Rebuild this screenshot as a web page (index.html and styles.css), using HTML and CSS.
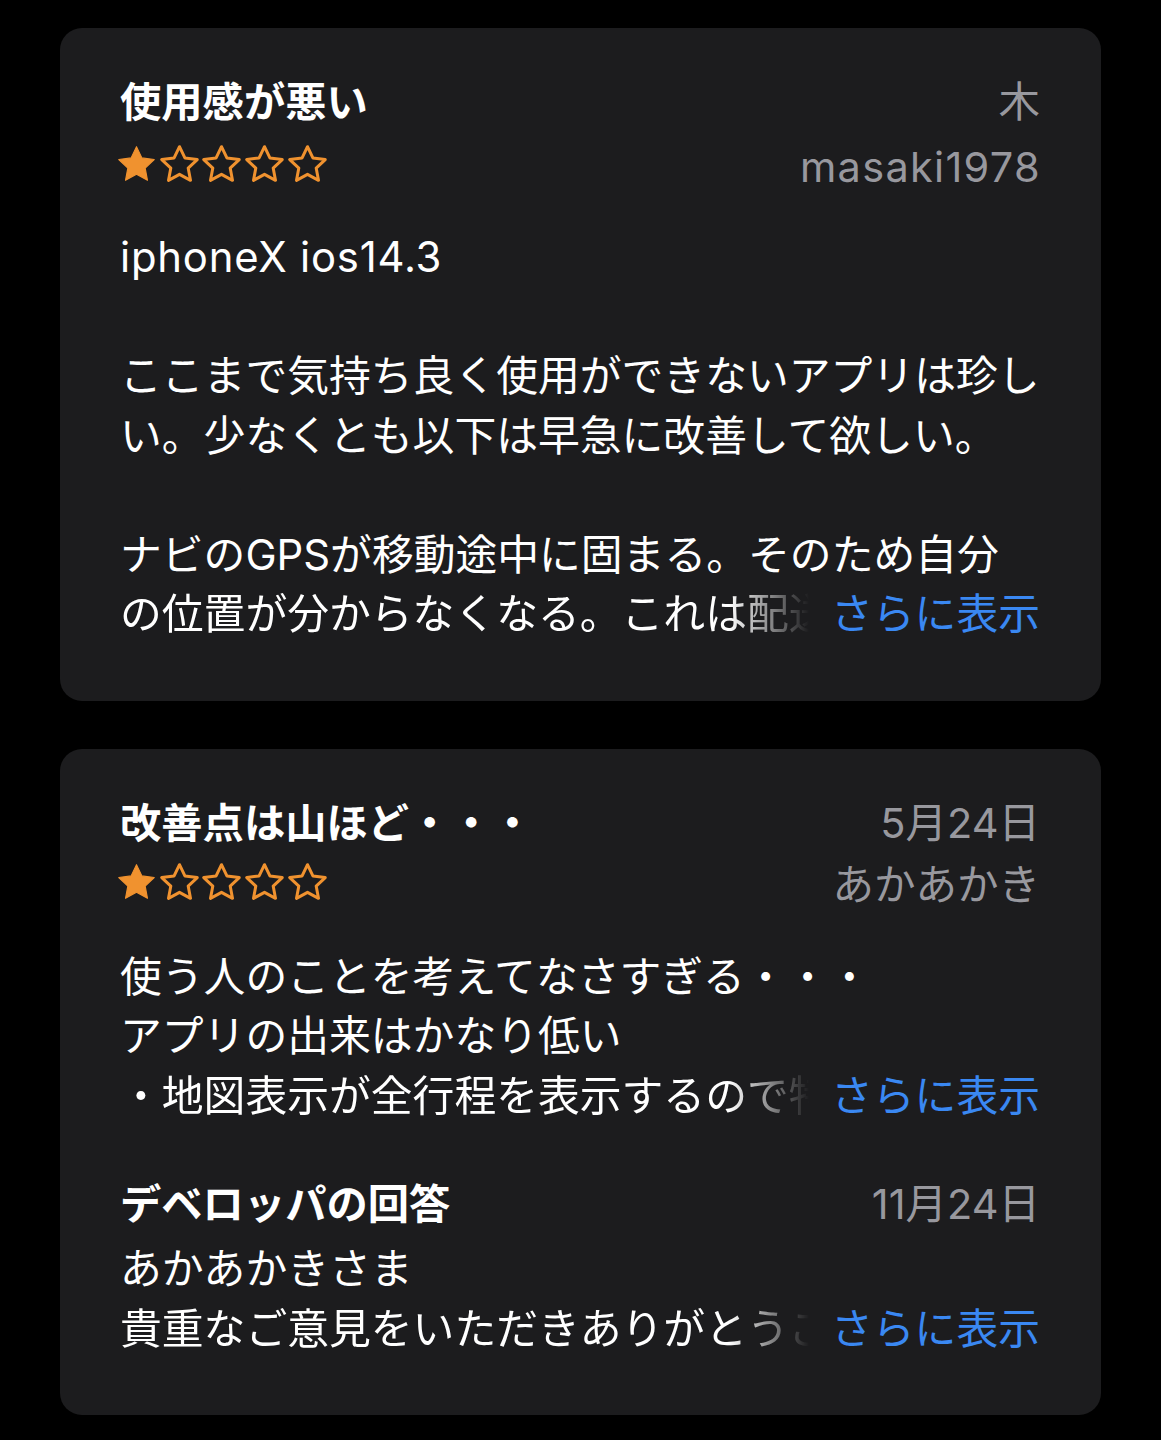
FILE: index.html
```html
<!DOCTYPE html>
<html lang="ja">
<head>
<meta charset="utf-8">
<title>レビュー</title>
<link rel="stylesheet" href="styles.css">
</head>
<body>
<svg width="0" height="0" class="defs" aria-hidden="true">
  <defs>
    <path id="star" d="M12 2.6l2.85 5.95 6.55.85-4.8 4.5 1.22 6.5L12 17.25 6.18 20.4l1.22-6.5-4.8-4.5 6.55-.85z"/>
  </defs>
</svg>
<main class="list">
  <section class="card">
    <div class="row head">
      <h2 class="title">使用感が悪い</h2>
      <span class="meta">木</span>
    </div>
    <div class="row sub">
      <div class="stars">
        <svg class="star full" viewBox="1.7 1.7 20.6 19.6"><use href="#star"/></svg>
        <svg class="star" viewBox="1.7 1.7 20.6 19.6"><use href="#star"/></svg>
        <svg class="star" viewBox="1.7 1.7 20.6 19.6"><use href="#star"/></svg>
        <svg class="star" viewBox="1.7 1.7 20.6 19.6"><use href="#star"/></svg>
        <svg class="star" viewBox="1.7 1.7 20.6 19.6"><use href="#star"/></svg>
      </div>
      <span class="meta user-latin">masaki1978</span>
    </div>
    <div class="body">
      <p class="latin">iphoneX ios14.3</p>
      <p class="para">ここまで気持ち良く使用ができないアプリは珍し<br>い。少なくとも以下は早急に改善して欲しい。</p>
      <p class="para">ナビのGPSが移動途中に固まる。そのため自分</p>
      <div class="more-line">
        <span class="clip">の位置が分からなくなる。これは配送ルートを</span>
        <a class="more" href="#">さらに表示</a>
      </div>
    </div>
  </section>

  <section class="card">
    <div class="row head">
      <h2 class="title">改善点は山ほど・・・</h2>
      <span class="meta">5月24日</span>
    </div>
    <div class="row sub sub2">
      <div class="stars">
        <svg class="star full" viewBox="1.7 1.7 20.6 19.6"><use href="#star"/></svg>
        <svg class="star" viewBox="1.7 1.7 20.6 19.6"><use href="#star"/></svg>
        <svg class="star" viewBox="1.7 1.7 20.6 19.6"><use href="#star"/></svg>
        <svg class="star" viewBox="1.7 1.7 20.6 19.6"><use href="#star"/></svg>
        <svg class="star" viewBox="1.7 1.7 20.6 19.6"><use href="#star"/></svg>
      </div>
      <span class="meta">あかあかき</span>
    </div>
    <div class="body body2">
      <p>使う人のことを考えてなさすぎる・・・<br>アプリの出来はかなり低い</p>
      <div class="more-line">
        <span class="clip">・地図表示が全行程を表示するので特に</span>
        <a class="more" href="#">さらに表示</a>
      </div>
    </div>
    <div class="row head dev">
      <h3 class="title">デベロッパの回答</h3>
      <span class="meta">11月24日</span>
    </div>
    <div class="body dev-body">
      <p>あかあかきさま</p>
      <div class="more-line">
        <span class="clip">貴重なご意見をいただきありがとうございます</span>
        <a class="more" href="#">さらに表示</a>
      </div>
    </div>
  </section>
</main>
</body>
</html>
```

FILE: styles.css
```css
* { box-sizing: border-box; }

html, body {
  margin: 0;
  padding: 0;
  background: #000;
}

body {
  font-family: "Inter", "Noto Sans CJK JP", "Noto Sans", sans-serif;
  color: #fff;
  font-size: 41.8px;
  -webkit-font-smoothing: antialiased;
}

.defs {
  position: absolute;
  width: 0;
  height: 0;
}

.list {
  display: flex;
  flex-direction: column;
  gap: 48px;
  padding: 28px 60px 27px;
}

.card {
  background: #1c1c1e;
  border-radius: 22px;
  padding: 49px 61px 56px 60px;
}

.row {
  display: flex;
  justify-content: space-between;
  align-items: center;
  height: 50px;
}

.title {
  margin: 0;
  font-size: 41.3px;
  font-weight: 700;
  line-height: 50px;
  white-space: nowrap;
}

.meta {
  color: #98989e;
  font-size: 41.5px;
  line-height: 50px;
  white-space: nowrap;
}

.user-latin {
  letter-spacing: 1.3px;
  margin-right: -1px;
}

.latin {
  letter-spacing: 0.8px;
}

.sub {
  margin-top: 15px;
}

.sub2 {
  margin-top: 12px;
}

.stars {
  display: flex;
  gap: 3.7px;
  align-items: center;
  margin-left: -3px;
  margin-bottom: 7px;
}

.star {
  width: 39px;
  height: 37px;
  fill: none;
  stroke: #f0922f;
  stroke-width: 1.6;
  stroke-linejoin: round;
}

.star.full {
  fill: #f0922f;
  stroke-width: 0.6;
}

.body {
  margin-top: 36px;
  line-height: 59.5px;
}

.body2 {
  margin-top: 38px;
}

.body p {
  margin: 0;
  white-space: nowrap;
}

.body .para {
  margin-top: 59.5px;
}

.more-line {
  display: flex;
  align-items: center;
  height: 59.5px;
}

.clip {
  flex: 1;
  min-width: 0;
  overflow: hidden;
  white-space: nowrap;
  margin-right: 22px;
  -webkit-mask-image: linear-gradient(to right, #000 calc(100% - 80px), transparent 100%);
  mask-image: linear-gradient(to right, #000 calc(100% - 80px), transparent 100%);
}

.more {
  color: #3a88f2;
  text-decoration: none;
  white-space: nowrap;
}

.dev {
  margin-top: 53px;
}

.dev-body {
  margin-top: 11px;
}
```
